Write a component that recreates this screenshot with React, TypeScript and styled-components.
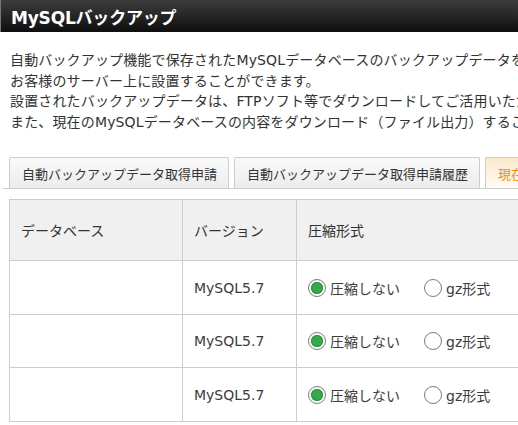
import styled, { createGlobalStyle } from 'styled-components';

const GlobalStyle = createGlobalStyle`
  html, body {
    margin: 0;
    padding: 0;
    background: #fff;
    overflow: hidden;
  }
  body {
    font-family: "DejaVu Sans", "Noto Sans CJK JP", sans-serif;
    color: #333;
  }
`;

const Page = styled.div`
  width: 760px;
`;

const Header = styled.h1`
  margin: 0;
  height: 32px;
  padding-left: 10px;
  display: flex;
  align-items: center;
  background: linear-gradient(#3d3d3d, #0e0e0e);
  border-left: 1px solid #777;
  color: #fff;
  font-size: 17px;
  font-weight: bold;
  letter-spacing: -0.2px;
`;

const Description = styled.p`
  margin: 18px 0 0;
  padding: 0 10px;
  font-size: 14px;
  line-height: 20.6px;
  letter-spacing: 0.15px;
  white-space: nowrap;
  color: #333;
`;

const TabBar = styled.ul`
  list-style: none;
  display: flex;
  gap: 5px;
  margin: 25px 0 0 3px;
  padding: 0 0 0 6px;
  border-bottom: 1px solid #ccc;
`;

const Tab = styled.li<{ $active?: boolean }>`
  height: 31px;
  padding: 0 11px 0 12px;
  display: flex;
  align-items: center;
  font-size: 13px;
  border: 1px solid #ccc;
  border-bottom: none;
  border-radius: 2px 2px 0 0;
  box-sizing: border-box;
  white-space: nowrap;
  color: ${p => (p.$active ? '#e8901c' : '#333')};
  background: ${p =>
    p.$active
      ? 'linear-gradient(#fde9cc, #fffaf3)'
      : 'linear-gradient(#fafafa, #ececec)'};
`;

const Table = styled.table`
  margin: 10px 0 0 9px;
  border-collapse: collapse;
  width: 740px;
  font-size: 14px;
`;

const HeadCell = styled.th<{ $width?: number }>`
  width: ${p => (p.$width ? `${p.$width}px` : 'auto')};
  height: 61px;
  padding: 0 11px;
  box-sizing: border-box;
  background: #f0f0f0;
  border: 1px solid #ccc;
  text-align: left;
  font-weight: normal;
  color: #333;
`;

const Cell = styled.td`
  height: 53.5px;
  padding: 0 11px;
  box-sizing: border-box;
  border: 1px solid #ccc;
  color: #3c3c3c;
`;

const RadioGroup = styled.div`
  display: flex;
  align-items: center;
  gap: 24px;
`;

const RadioLabel = styled.label`
  display: flex;
  align-items: center;
  gap: 4px;
  white-space: nowrap;
`;

const RadioMark = styled.span<{ $checked?: boolean }>`
  width: 18px;
  height: 18px;
  border-radius: 50%;
  border: 1px solid #7a7a7a;
  box-sizing: border-box;
  background: #fff;
  display: flex;
  align-items: center;
  justify-content: center;

  &::after {
    content: '';
    display: ${p => (p.$checked ? 'block' : 'none')};
    width: 12px;
    height: 12px;
    border-radius: 50%;
    background: #36a94a;
    box-shadow: inset 0 0 0 1px #2d8f3e;
  }
`;

const rows = [1, 2, 3];

export default function App() {
  return (
    <Page>
      <GlobalStyle />
      <Header>MySQLバックアップ</Header>
      <Description>
        自動バックアップ機能で保存されたMySQLデータベースのバックアップデータを
        <br />
        お客様のサーバー上に設置することができます。
        <br />
        設置されたバックアップデータは、FTPソフト等でダウンロードしてご活用いただけます。
        <br />
        また、現在のMySQLデータベースの内容をダウンロード（ファイル出力）することもできます。
      </Description>
      <TabBar>
        <Tab>自動バックアップデータ取得申請</Tab>
        <Tab>自動バックアップデータ取得申請履歴</Tab>
        <Tab $active>現在のMySQLデータベースのダウンロード</Tab>
      </TabBar>
      <Table>
        <thead>
          <tr>
            <HeadCell $width={173}>データベース</HeadCell>
            <HeadCell $width={114}>バージョン</HeadCell>
            <HeadCell>圧縮形式</HeadCell>
          </tr>
        </thead>
        <tbody>
          {rows.map(r => (
            <tr key={r}>
              <Cell />
              <Cell>MySQL5.7</Cell>
              <Cell>
                <RadioGroup>
                  <RadioLabel>
                    <RadioMark $checked />
                    圧縮しない
                  </RadioLabel>
                  <RadioLabel>
                    <RadioMark />
                    gz形式
                  </RadioLabel>
                </RadioGroup>
              </Cell>
            </tr>
          ))}
        </tbody>
      </Table>
    </Page>
  );
}
